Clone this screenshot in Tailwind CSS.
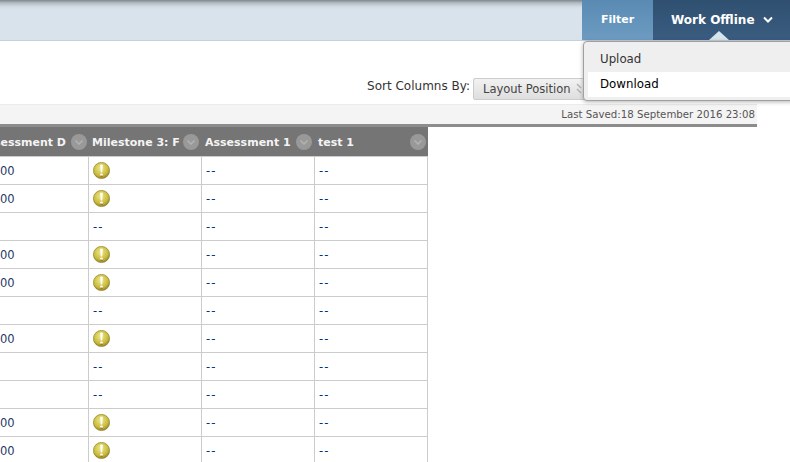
<!DOCTYPE html>
<html lang="en">

<head>
  <meta charset="UTF-8" />
  <title>Grade Center</title>
  <script src="https://cdn.jsdelivr.net/npm/@tailwindcss/browser@4"></script>
</head>

<body class="bg-white h-[462px] w-[790px] overflow-hidden relative font-['DejaVu_Sans',sans-serif] text-[11.5px]">
  <svg class="absolute w-0 h-0">
    <defs>
      <radialGradient id="warnFill" cx="45%" cy="35%" r="65%">
        <stop offset="0" stop-color="#f0e88a" />
        <stop offset="0.7" stop-color="#c9bb3c" />
        <stop offset="1" stop-color="#94872a" />
      </radialGradient>
    </defs>
    <symbol id="warn" viewBox="0 0 16 16">
      <circle cx="8" cy="8" r="7.6" fill="url(#warnFill)" stroke="#8f8428" stroke-width="0.7" />
      <path d="M6.7 2.6h2.6l-.6 7.2H7.3z" fill="#fff" />
      <circle cx="8" cy="12.1" r="1.3" fill="#fff" />
      <path d="M7 13.3h2" stroke="#a8421e" stroke-width="0.9" />
    </symbol>
    <symbol id="chev" viewBox="0 0 16 16">
      <circle cx="8" cy="8" r="8" fill="#999" />
      <path d="M4.5 6.5 8 10l3.5-3.5" fill="none" stroke="#b4b4b4" stroke-width="1.5" />
    </symbol>
  </svg>

  <!-- Top bar -->
  <div class="h-[41px] flex justify-end border-b border-[#c6d0d8] bg-[linear-gradient(#7f858c_0px,#b4bcc4_3px,#d3dde5_7px,#d9e3eb_10px,#d9e3eb_100%)]">
    <div class="w-[71px] flex items-center justify-center text-white font-bold text-[11px] bg-[linear-gradient(#5a8ab3,#6d9bc2)]">Filter</div>
    <div class="w-[137px] relative flex items-center pl-[18px] gap-[8px] text-white font-bold text-[12px] bg-[linear-gradient(#2f5070,#3a5c80)]">
      <span>Work Offline</span>
      <svg width="10" height="8" viewBox="0 0 10 8"><path d="M1 1.5 5 5.5l4-4" fill="none" stroke="#fff" stroke-width="2" /></svg>
      <div class="absolute left-[56px] bottom-0 w-0 h-0 border-x-[10px] border-x-transparent border-b-[9px] border-b-[#d5e6ec]"></div>
    </div>
  </div>

  <!-- Work Offline menu -->
  <div class="absolute left-[583px] top-[41px] w-[212px] h-[60px] bg-[#efefef] border border-[#a0a0a0] rounded-[4px] shadow-[0_1px_4px_rgba(0,0,0,0.3)] pl-[4px] pt-[5px] text-[11.8px] text-[#222]">
    <div class="h-[25px] flex items-center pl-[12px] text-[#333]">Upload</div>
    <div class="h-[25px] flex items-center pl-[12px] bg-white text-black">Download</div>
  </div>

  <!-- Sort row -->
  <div class="h-[63px] flex justify-end items-start pt-[37px] pr-[205px] gap-[3px] text-[#333]">
    <span class="leading-[16px] whitespace-nowrap text-[12px]">Sort Columns By:</span>
    <div class="w-[112px] h-[22px] border border-[#ccc] rounded-[2px] bg-[linear-gradient(#f2f2f2,#dedede)] pl-[9px] pr-[1px] leading-[20px] text-[#444] whitespace-nowrap overflow-hidden flex justify-between items-center">
      <span>Layout Position</span>
      <svg width="7" height="12" viewBox="0 0 7 12"><path d="M1 1l4 4M1 6l4 4" fill="none" stroke="#b5b5b5" stroke-width="1.6" /></svg>
    </div>
  </div>

  <!-- Last saved bar -->
  <div class="w-[757px] h-[20px] bg-[#f4f4f4] border-t border-[#ebebeb] flex justify-end items-center pr-[2px] text-[10.2px] text-[#555] whitespace-nowrap">Last Saved:18 September 2016 23:08</div>

  <!-- Grid -->
  <div class="w-[757px] h-[3px] bg-[#8c8c8c]"></div>
  <div class="w-[428px] text-[#1f3a66]">
    <div class="flex h-[29px] bg-[#757575] text-[#f4f4f4] font-bold text-[11px] items-center">
      <div class="w-[88px] flex justify-end items-center overflow-hidden whitespace-nowrap pr-[1px] gap-[5px]"><span class="pt-[3px]">Assessment D</span><svg class="w-[16px] h-[16px] shrink-0 mt-[1px]"><use href="#chev" /></svg></div>
      <div class="w-[113px] flex items-center justify-between overflow-hidden whitespace-nowrap pl-[4px] pr-[2px]"><span class="w-[88px] overflow-hidden pt-[3px]">Milestone 3: Final</span><svg class="w-[16px] h-[16px] shrink-0 mt-[1px]"><use href="#chev" /></svg></div>
      <div class="w-[113px] flex items-center justify-between overflow-hidden whitespace-nowrap pl-[4px] pr-[2px]"><span class="pt-[3px]">Assessment 1</span><svg class="w-[16px] h-[16px] shrink-0 mt-[1px]"><use href="#chev" /></svg></div>
      <div class="w-[114px] flex items-center justify-between overflow-hidden whitespace-nowrap pl-[4px] pr-[2px]"><span class="pt-[3px]">test 1</span><svg class="w-[16px] h-[16px] shrink-0 mt-[1px]"><use href="#chev" /></svg></div>
    </div>

    <div class="flex h-[28px] border-t border-[#ccc] items-center">
      <div class="w-[88px] h-full flex items-center overflow-hidden pt-[2px]">00</div>
      <div class="w-[113px] h-full flex items-center border-l border-[#ccc] pl-[4px]"><svg class="w-[17px] h-[17px]"><use href="#warn" /></svg></div>
      <div class="w-[113px] h-full flex items-center border-l border-[#ccc] pl-[4px] pt-[2px] text-[#003380] tracking-[1px]">--</div>
      <div class="w-[114px] h-full flex items-center border-x border-[#ccc] pl-[4px] pt-[2px] text-[#003380] tracking-[1px]">--</div>
    </div>
    <div class="flex h-[28px] border-t border-[#ccc] items-center">
      <div class="w-[88px] h-full flex items-center overflow-hidden pt-[2px]">00</div>
      <div class="w-[113px] h-full flex items-center border-l border-[#ccc] pl-[4px]"><svg class="w-[17px] h-[17px]"><use href="#warn" /></svg></div>
      <div class="w-[113px] h-full flex items-center border-l border-[#ccc] pl-[4px] pt-[2px] text-[#003380] tracking-[1px]">--</div>
      <div class="w-[114px] h-full flex items-center border-x border-[#ccc] pl-[4px] pt-[2px] text-[#003380] tracking-[1px]">--</div>
    </div>
    <div class="flex h-[28px] border-t border-[#ccc] items-center">
      <div class="w-[88px] h-full"></div>
      <div class="w-[113px] h-full flex items-center border-l border-[#ccc] pl-[4px] pt-[2px] text-[#003380] tracking-[1px]">--</div>
      <div class="w-[113px] h-full flex items-center border-l border-[#ccc] pl-[4px] pt-[2px] text-[#003380] tracking-[1px]">--</div>
      <div class="w-[114px] h-full flex items-center border-x border-[#ccc] pl-[4px] pt-[2px] text-[#003380] tracking-[1px]">--</div>
    </div>
    <div class="flex h-[28px] border-t border-[#ccc] items-center">
      <div class="w-[88px] h-full flex items-center overflow-hidden pt-[2px]">00</div>
      <div class="w-[113px] h-full flex items-center border-l border-[#ccc] pl-[4px]"><svg class="w-[17px] h-[17px]"><use href="#warn" /></svg></div>
      <div class="w-[113px] h-full flex items-center border-l border-[#ccc] pl-[4px] pt-[2px] text-[#003380] tracking-[1px]">--</div>
      <div class="w-[114px] h-full flex items-center border-x border-[#ccc] pl-[4px] pt-[2px] text-[#003380] tracking-[1px]">--</div>
    </div>
    <div class="flex h-[28px] border-t border-[#ccc] items-center">
      <div class="w-[88px] h-full flex items-center overflow-hidden pt-[2px]">00</div>
      <div class="w-[113px] h-full flex items-center border-l border-[#ccc] pl-[4px]"><svg class="w-[17px] h-[17px]"><use href="#warn" /></svg></div>
      <div class="w-[113px] h-full flex items-center border-l border-[#ccc] pl-[4px] pt-[2px] text-[#003380] tracking-[1px]">--</div>
      <div class="w-[114px] h-full flex items-center border-x border-[#ccc] pl-[4px] pt-[2px] text-[#003380] tracking-[1px]">--</div>
    </div>
    <div class="flex h-[28px] border-t border-[#ccc] items-center">
      <div class="w-[88px] h-full"></div>
      <div class="w-[113px] h-full flex items-center border-l border-[#ccc] pl-[4px] pt-[2px] text-[#003380] tracking-[1px]">--</div>
      <div class="w-[113px] h-full flex items-center border-l border-[#ccc] pl-[4px] pt-[2px] text-[#003380] tracking-[1px]">--</div>
      <div class="w-[114px] h-full flex items-center border-x border-[#ccc] pl-[4px] pt-[2px] text-[#003380] tracking-[1px]">--</div>
    </div>
    <div class="flex h-[28px] border-t border-[#ccc] items-center">
      <div class="w-[88px] h-full flex items-center overflow-hidden pt-[2px]">00</div>
      <div class="w-[113px] h-full flex items-center border-l border-[#ccc] pl-[4px]"><svg class="w-[17px] h-[17px]"><use href="#warn" /></svg></div>
      <div class="w-[113px] h-full flex items-center border-l border-[#ccc] pl-[4px] pt-[2px] text-[#003380] tracking-[1px]">--</div>
      <div class="w-[114px] h-full flex items-center border-x border-[#ccc] pl-[4px] pt-[2px] text-[#003380] tracking-[1px]">--</div>
    </div>
    <div class="flex h-[28px] border-t border-[#ccc] items-center">
      <div class="w-[88px] h-full"></div>
      <div class="w-[113px] h-full flex items-center border-l border-[#ccc] pl-[4px] pt-[2px] text-[#003380] tracking-[1px]">--</div>
      <div class="w-[113px] h-full flex items-center border-l border-[#ccc] pl-[4px] pt-[2px] text-[#003380] tracking-[1px]">--</div>
      <div class="w-[114px] h-full flex items-center border-x border-[#ccc] pl-[4px] pt-[2px] text-[#003380] tracking-[1px]">--</div>
    </div>
    <div class="flex h-[28px] border-t border-[#ccc] items-center">
      <div class="w-[88px] h-full"></div>
      <div class="w-[113px] h-full flex items-center border-l border-[#ccc] pl-[4px] pt-[2px] text-[#003380] tracking-[1px]">--</div>
      <div class="w-[113px] h-full flex items-center border-l border-[#ccc] pl-[4px] pt-[2px] text-[#003380] tracking-[1px]">--</div>
      <div class="w-[114px] h-full flex items-center border-x border-[#ccc] pl-[4px] pt-[2px] text-[#003380] tracking-[1px]">--</div>
    </div>
    <div class="flex h-[28px] border-t border-[#ccc] items-center">
      <div class="w-[88px] h-full flex items-center overflow-hidden pt-[2px]">00</div>
      <div class="w-[113px] h-full flex items-center border-l border-[#ccc] pl-[4px]"><svg class="w-[17px] h-[17px]"><use href="#warn" /></svg></div>
      <div class="w-[113px] h-full flex items-center border-l border-[#ccc] pl-[4px] pt-[2px] text-[#003380] tracking-[1px]">--</div>
      <div class="w-[114px] h-full flex items-center border-x border-[#ccc] pl-[4px] pt-[2px] text-[#003380] tracking-[1px]">--</div>
    </div>
    <div class="flex h-[28px] border-t border-[#ccc] items-center">
      <div class="w-[88px] h-full flex items-center overflow-hidden pt-[2px]">00</div>
      <div class="w-[113px] h-full flex items-center border-l border-[#ccc] pl-[4px]"><svg class="w-[17px] h-[17px]"><use href="#warn" /></svg></div>
      <div class="w-[113px] h-full flex items-center border-l border-[#ccc] pl-[4px] pt-[2px] text-[#003380] tracking-[1px]">--</div>
      <div class="w-[114px] h-full flex items-center border-x border-[#ccc] pl-[4px] pt-[2px] text-[#003380] tracking-[1px]">--</div>
    </div>
  </div>
</body>

</html>
